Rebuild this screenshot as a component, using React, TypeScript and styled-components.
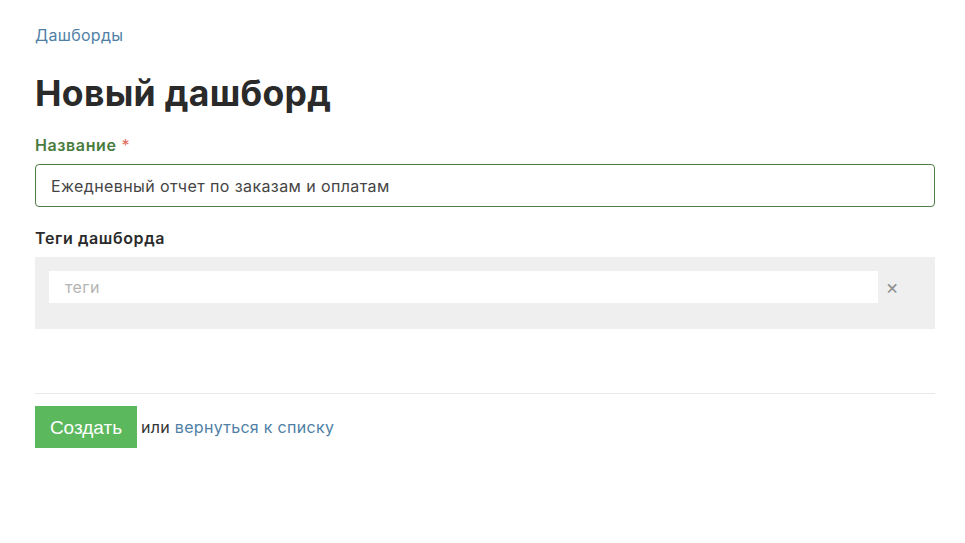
import React from "react";
import styled, { createGlobalStyle } from "styled-components";

const Global = createGlobalStyle`
  html, body { margin: 0; padding: 0; background: #fff; }
  body { font-family: Inter, "Noto Sans", sans-serif; color: #333; }
`;

const Page = styled.div`
  padding: 24px 30px 0 35px;
  width: 900px;
`;

const Breadcrumb = styled.a`
  display: block;
  font-size: 16px;
  line-height: 22px;
  letter-spacing: 0.3px;
  color: #4f7fa6;
  text-decoration: none;
`;

const Title = styled.h1`
  margin: 27px 0 0;
  font-size: 35.5px;
  line-height: 42px;
  font-weight: 700;
  color: #2a2a2a;
  letter-spacing: 0.3px;
`;

const Field = styled.div<{ $gap: number }>`
  display: flex;
  flex-direction: column;
  gap: 8px;
  margin-top: ${(p) => p.$gap}px;
`;

const Label = styled.label<{ $accent?: boolean }>`
  font-size: 16px;
  line-height: 22px;
  font-weight: 600;
  letter-spacing: 0.6px;
  color: ${(p) => (p.$accent ? "#4a7b3e" : "#2b2b2b")};
`;

const Star = styled.span`
  color: #e06a5a;
  margin-left: 5px;
  font-weight: 400;
`;

const TextInput = styled.div`
  box-sizing: border-box;
  height: 43px;
  border: 1px solid #4f7d45;
  border-radius: 4px;
  padding: 0 15px;
  display: flex;
  align-items: center;
  font-size: 16px;
  letter-spacing: 0.4px;
  color: #454545;
`;

const TagsBox = styled.div`
  background: #efefef;
  height: 72px;
  padding: 14px 14px 0;
  box-sizing: border-box;
  display: flex;
  align-items: flex-start;
`;

const TagsInput = styled.div`
  background: #fff;
  width: 829px;
  height: 32px;
  display: flex;
  align-items: center;
  padding-left: 16px;
  box-sizing: border-box;
  font-size: 16px;
  letter-spacing: 0.4px;
  color: #b4b4b4;
`;

const Clear = styled.span`
  width: 28px;
  height: 32px;
  display: flex;
  align-items: center;
  justify-content: center;
  color: #8f8f8f;
  font-size: 20px;
`;

const Divider = styled.hr`
  border: none;
  border-top: 1px solid #e8e8e8;
  margin: 64px 0 12px;
`;

const Actions = styled.div`
  display: flex;
  align-items: center;
  gap: 4px;
  font-size: 16px;
  letter-spacing: 0.3px;
  color: #333;
`;

const Button = styled.button`
  background: #5cb85c;
  border: none;
  color: #fff;
  height: 42px;
  width: 102px;
  font-family: "Liberation Sans", Arial, sans-serif;
  font-size: 19px;
  padding: 2px 0 0;
  cursor: pointer;
`;

const Link = styled.a`
  color: #4f7fa6;
  text-decoration: none;
`;

export default function App() {
  return (
    <>
      <Global />
      <Page>
        <Breadcrumb href="#">Дашборды</Breadcrumb>
        <Title>Новый дашборд</Title>
        <Field $gap={19}>
          <Label $accent>
            Название<Star>*</Star>
          </Label>
          <TextInput>Ежедневный отчет по заказам и оплатам</TextInput>
        </Field>
        <Field $gap={20}>
          <Label>Теги дашборда</Label>
          <TagsBox>
            <TagsInput>теги</TagsInput>
            <Clear>×</Clear>
          </TagsBox>
        </Field>
        <Divider />
        <Actions>
          <Button>Создать</Button>
          <span>
            или <Link href="#">вернуться к списку</Link>
          </span>
        </Actions>
      </Page>
    </>
  );
}
